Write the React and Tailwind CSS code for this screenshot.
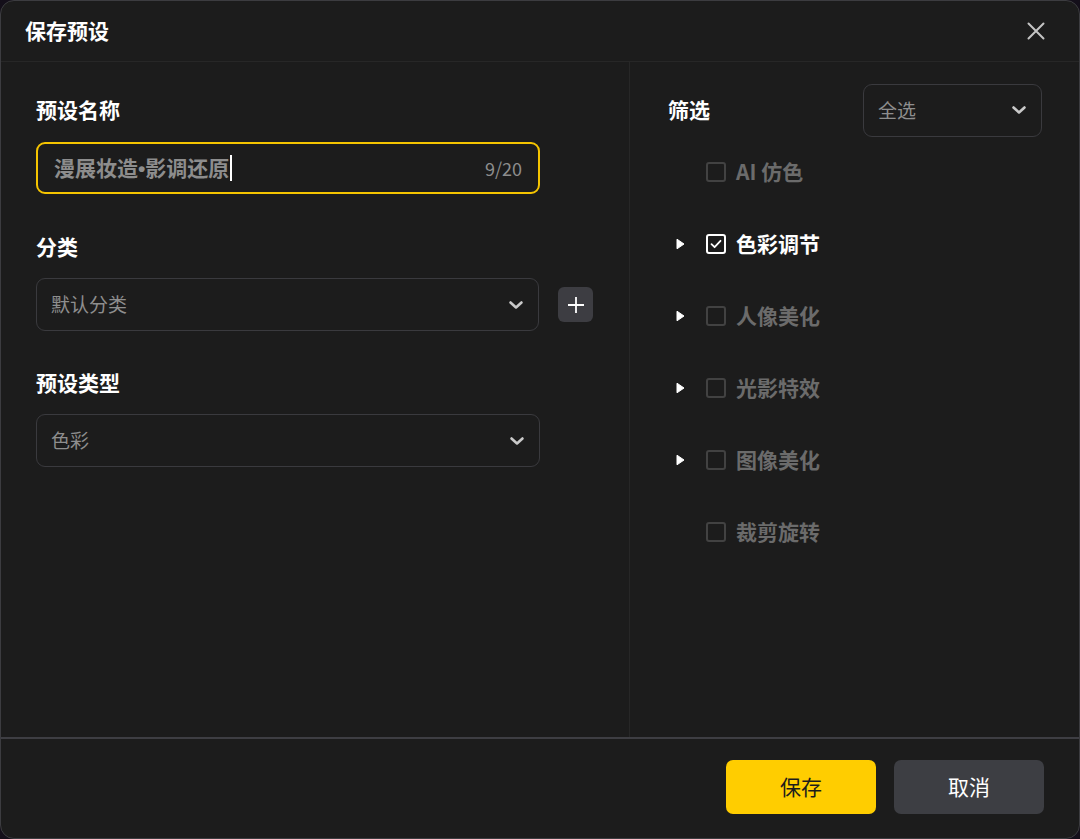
import React, { useState } from 'react';

const FONT = { fontFamily: '"Noto Sans CJK SC", "Noto Sans", sans-serif' };

const Chevron = () => (
    <svg width="16" height="16" viewBox="0 0 16 16" fill="none">
        <polyline points="2.5,5.5 8,10.5 13.5,5.5" stroke="#c9c9c9" strokeWidth="2.6" strokeLinecap="round" strokeLinejoin="round" />
    </svg>
);

const Triangle = () => (
    <svg width="9" height="12" viewBox="0 0 9 12">
        <path d="M1 1.2 L8 6 L1 10.8 Z" fill="#ffffff" stroke="#ffffff" strokeWidth="1" strokeLinejoin="round" />
    </svg>
);

const Select = ({ value }) => (
    <div className="h-[53px] flex-1 rounded-[9px] border border-[#3a3a3e] flex items-center justify-between pl-[14px] pr-[14px]">
        <span className="text-[19px] text-[#8e8e8e]">{value}</span>
        <Chevron />
    </div>
);

const filters = [
    { label: 'AI 仿色', expandable: false, checked: false },
    { label: '色彩调节', expandable: true, checked: true },
    { label: '人像美化', expandable: true, checked: false },
    { label: '光影特效', expandable: true, checked: false },
    { label: '图像美化', expandable: true, checked: false },
    { label: '裁剪旋转', expandable: false, checked: false },
];

const FilterRow = ({ item }) => (
    <div className="h-[72px] flex items-center pl-[46px]">
        <div className="w-[30px] flex items-center">{item.expandable && <Triangle />}</div>
        <div
            className={`w-[20px] h-[20px] rounded-[3px] border-2 flex items-center justify-center ${item.checked ? 'border-white' : 'border-[#424242]'}`}
        >
            {item.checked && (
                <svg width="14" height="14" viewBox="0 0 14 14" fill="none">
                    <polyline points="2.5,7.2 5.6,10.2 11.5,3.8" stroke="#ffffff" strokeWidth="1.8" strokeLinecap="round" strokeLinejoin="round" />
                </svg>
            )}
        </div>
        <span className={`ml-[10px] text-[21px] font-bold ${item.checked ? 'text-white' : 'text-[#6b6b6b]'}`}>{item.label}</span>
    </div>
);

const App = () => {
    const [name] = useState(['漫展妆造', '影调还原']);

    return (
        <div className="w-[1080px] h-[839px] bg-[#140f1a]" style={FONT}>
            <div className="w-full h-full rounded-[14px] border border-[#3c3c40] bg-[#1c1c1c] flex flex-col overflow-hidden">
                {/* Header */}
                <div className="h-[61px] shrink-0 border-b border-[#272727] flex items-center justify-between pl-[24px] pr-[34px]">
                    <h2 className="text-[21px] font-bold text-white">保存预设</h2>
                    <svg width="18" height="18" viewBox="0 0 18 18" fill="none">
                        <path d="M1.5 1.5 L16.5 16.5 M16.5 1.5 L1.5 16.5" stroke="#c4c4c4" strokeWidth="2" strokeLinecap="round" />
                    </svg>
                </div>

                {/* Body */}
                <div className="flex-1 flex">
                    <div className="w-[629px] border-r border-[#272727] pt-[34px] pl-[35px] pr-[36px] flex flex-col">
                        <div className="text-[21px] leading-[26px] font-bold text-white">预设名称</div>
                        <div className="mt-[20px] w-[504px] h-[52px] rounded-[9px] border-2 border-[#f5c400] flex items-center justify-between pl-[16px] pr-[16px]">
                            <div className="flex items-center">
                                <span className="text-[21px] font-bold text-[#8d8d8d]">
                                    {name[0]}
                                    <span style={{ fontFamily: '"Liberation Sans", sans-serif' }}>•</span>
                                    {name[1]}
                                </span>
                                <span className="ml-[1px] w-[2px] h-[26px] bg-white" />
                            </div>
                            <span className="text-[18px] text-[#8d8d8d]">9/20</span>
                        </div>

                        <div className="mt-[39px] text-[21px] leading-[26px] font-bold text-white">分类</div>
                        <div className="mt-[19px] flex items-center">
                            <div className="w-[504px] flex">
                                <Select value="默认分类" />
                            </div>
                            <button className="ml-[19px] w-[35px] h-[35px] rounded-[6px] bg-[#3d3d42] flex items-center justify-center">
                                <svg width="18" height="18" viewBox="0 0 18 18" fill="none">
                                    <path d="M9 1 V17 M1 9 H17" stroke="#ffffff" strokeWidth="1.8" />
                                </svg>
                            </button>
                        </div>

                        <div className="mt-[38px] text-[21px] leading-[26px] font-bold text-white">预设类型</div>
                        <div className="mt-[19px] w-[504px] flex">
                            <Select value="色彩" />
                        </div>
                    </div>

                    <div className="flex-1 pt-[22px] flex flex-col">
                        <div className="h-[52px] flex items-center justify-between pl-[38px] pr-[37px]">
                            <span className="text-[21px] font-bold text-white">筛选</span>
                            <div className="w-[179px] flex">
                                <Select value="全选" />
                            </div>
                        </div>
                        <div className="flex flex-col">
                            {filters.map((item) => (
                                <FilterRow key={item.label} item={item} />
                            ))}
                        </div>
                    </div>
                </div>

                {/* Footer */}
                <div className="h-[101px] shrink-0 border-t-2 border-[#3e3e43] flex justify-end items-start pt-[21px] pr-[35px] gap-[18px]">
                    <button className="w-[150px] h-[54px] rounded-[7px] bg-[#ffcd00] text-[21px] text-[#1c1c1c]">保存</button>
                    <button className="w-[150px] h-[54px] rounded-[7px] bg-[#3d3e43] text-[21px] text-white">取消</button>
                </div>
            </div>
        </div>
    );
};

export default App;
